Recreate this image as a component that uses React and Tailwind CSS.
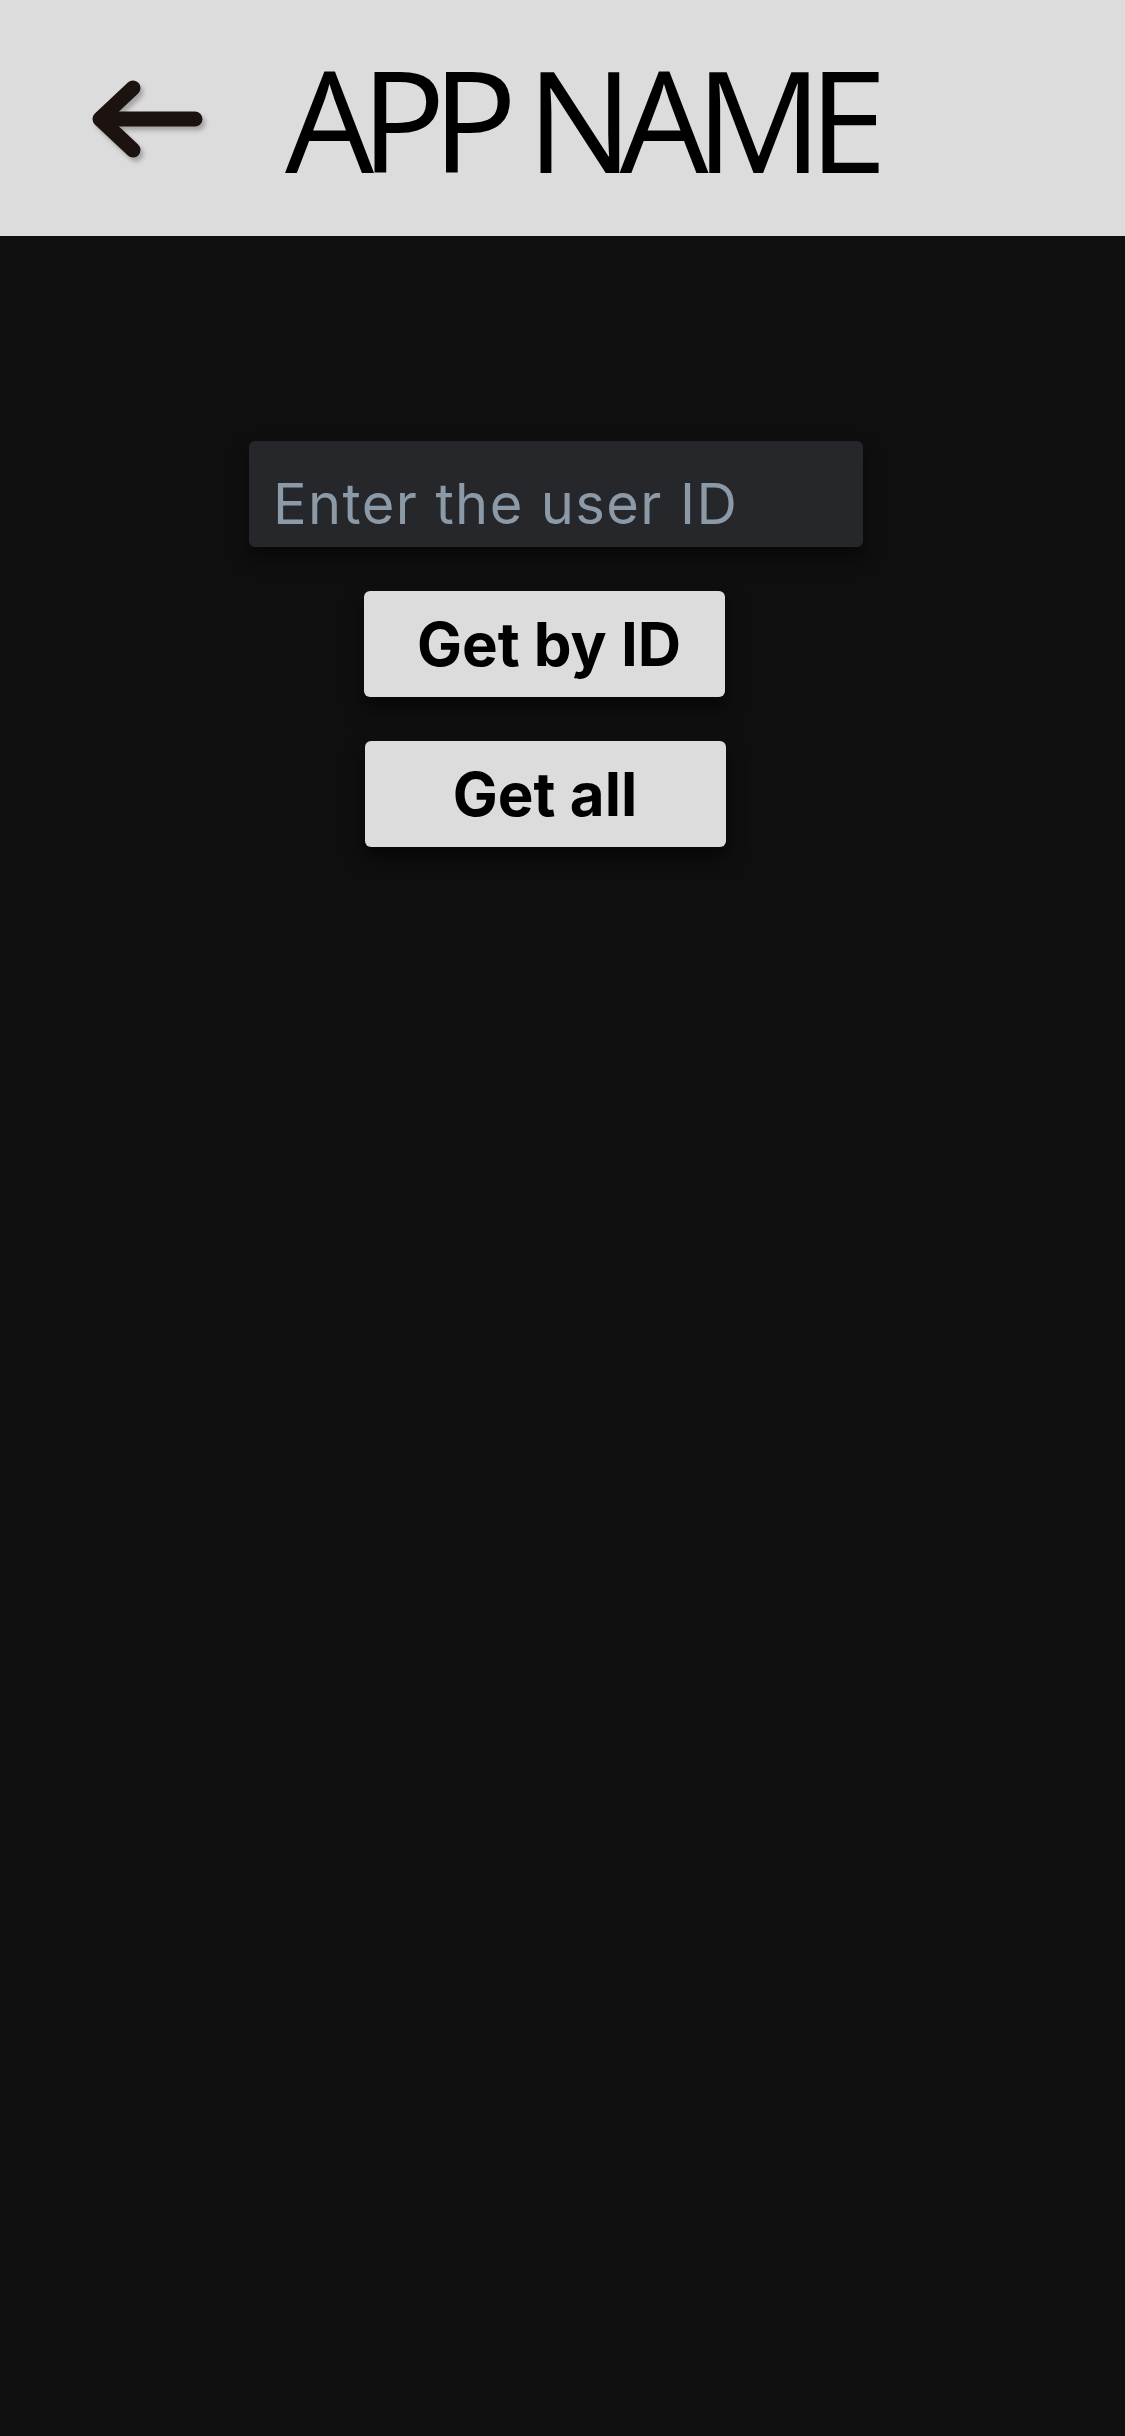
import React from 'react'

function BackArrow() {
  return (
    <svg
      width="124"
      height="84"
      viewBox="0 0 124 84"
      className="drop-shadow-[3px_4px_2px_rgba(0,0,0,0.25)]"
    >
      <g
        fill="none"
        stroke="#1c1210"
        strokeWidth="15"
        strokeLinecap="round"
        strokeLinejoin="round"
      >
        <path d="M44 10 L11 41 L44 72" />
        <path d="M12 41 L106 41" />
      </g>
    </svg>
  )
}

export default function App() {
  return (
    <div className="min-h-[2436px] w-full bg-[#0f0f0f] flex flex-col">
      <header className="h-[236px] bg-[#dcdcdc] flex items-center">
        <div className="ml-[89px] mt-[4px]">
          <BackArrow />
        </div>
        <h1
          className="ml-[72px] text-[141px] leading-none tracking-[-0.095em] text-black font-normal"
          style={{ fontFamily: '"Open Sans", "Liberation Sans", sans-serif' }}
        >
          APP NAME
        </h1>
      </header>

      <main
        className="flex flex-col items-center pt-[205px]"
        style={{ fontFamily: 'Inter, "Noto Sans", sans-serif' }}
      >
        <input
          type="text"
          placeholder="Enter the user ID"
          className="mr-[13px] w-[614px] h-[106px] rounded-md bg-[#25272a] px-[24px] pt-[19px] text-[56px] tracking-[0.025em] text-[#c8d0d8] placeholder:text-[#8c99a6] outline-none shadow-[0_10px_18px_rgba(0,0,0,0.45)]"
        />
        <button className="mt-[44px] mr-[37px] w-[361px] h-[106px] rounded-md bg-[#dcdcdc] text-black text-[60px] font-bold pl-[10px] shadow-[0_10px_18px_rgba(0,0,0,0.6)]">
          Get by ID
        </button>
        <button className="mt-[44px] mr-[35px] w-[361px] h-[106px] rounded-md bg-[#dcdcdc] text-black text-[60px] font-bold shadow-[0_10px_18px_rgba(0,0,0,0.6)]">
          Get all
        </button>
      </main>
    </div>
  )
}
